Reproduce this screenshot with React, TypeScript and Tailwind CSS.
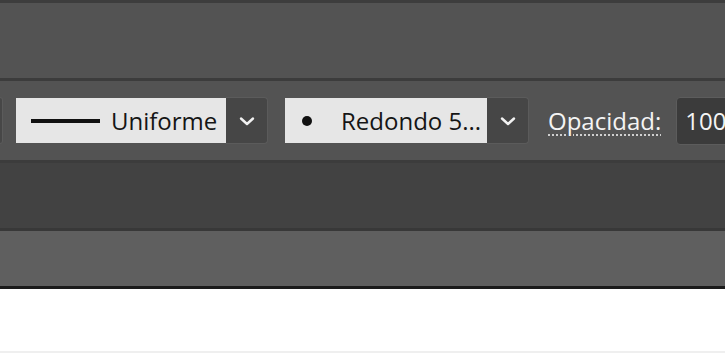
import React from 'react';

function Chevron() {
  return (
    <svg width="16" height="10" viewBox="0 0 16 10" fill="none">
      <path d="M2 2.5 L8 8 L14 2.5" stroke="#f2f2f2" strokeWidth="2.4" strokeLinecap="round" strokeLinejoin="round" />
    </svg>
  );
}

function Dropdown({ width, children }: { width: string; children: React.ReactNode }) {
  return (
    <div className="flex items-center shrink-0">
      <div className={`${width} shrink-0 h-[45px] bg-[#e6e6e6] flex items-center text-[#151515]`}>{children}</div>
      <div className="w-[42px] shrink-0 h-[47px] bg-[#464646] border border-[#5b5b5b] border-l-0 rounded-r-[4px] flex items-center justify-center">
        <Chevron />
      </div>
    </div>
  );
}

export default function App() {
  return (
    <div className="w-[725px] h-[353px] overflow-hidden flex flex-col bg-white" style={{ fontFamily: '"Open Sans", "DejaVu Sans", sans-serif' }}>
      <div className="h-[3px] bg-[#3d3d3d]" />
      <div className="h-[75px] bg-[#535353]" />
      <div className="h-[3px] bg-[#3c3c3c]" />

      {/* stroke toolbar */}
      <div className="h-[79px] bg-[#535353] flex items-center text-[24px] leading-none font-medium overflow-hidden">
        <div className="w-[3px] shrink-0 h-[47px] bg-[#474747] border border-l-0 border-[#5b5b5b] rounded-r-[3px] mr-[13px]" />
        <Dropdown width="w-[210px]">
          <div className="ml-[15px] shrink-0 w-[69px] h-[4px] bg-[#111]" />
          <span className="ml-[11px]">Uniforme</span>
        </Dropdown>
        <div className="w-[17px] shrink-0" />
        <Dropdown width="w-[202px]">
          <div className="ml-[17px] shrink-0 w-[10px] h-[10px] rounded-full bg-[#111]" />
          <span className="ml-[29px] whitespace-nowrap">Redondo 5...</span>
        </Dropdown>
        <span className="ml-[19px] shrink-0 whitespace-nowrap text-[#f4f4f4] underline decoration-dotted decoration-[#cfcfcf] decoration-2 underline-offset-[5px]">
          Opacidad:
        </span>
        <div className="ml-[15px] w-[80px] h-[48px] shrink-0 bg-[#3b3b3b] border border-[#5c5c5c] rounded-[4px] flex items-center pl-[8px] text-[#f4f4f4]">
          <span>100</span>
        </div>
      </div>

      <div className="h-[3px] bg-[#3c3c3c]" />
      <div className="h-[65px] bg-[#424242]" />
      <div className="h-[3px] bg-[#383838]" />
      <div className="h-[55px] bg-[#5f5f5f]" />
      <div className="h-[3px] bg-[#1b1b1b]" />
      <div className="h-[62px] bg-white" />
      <div className="h-[2px] bg-[#efefef]" />
    </div>
  );
}
